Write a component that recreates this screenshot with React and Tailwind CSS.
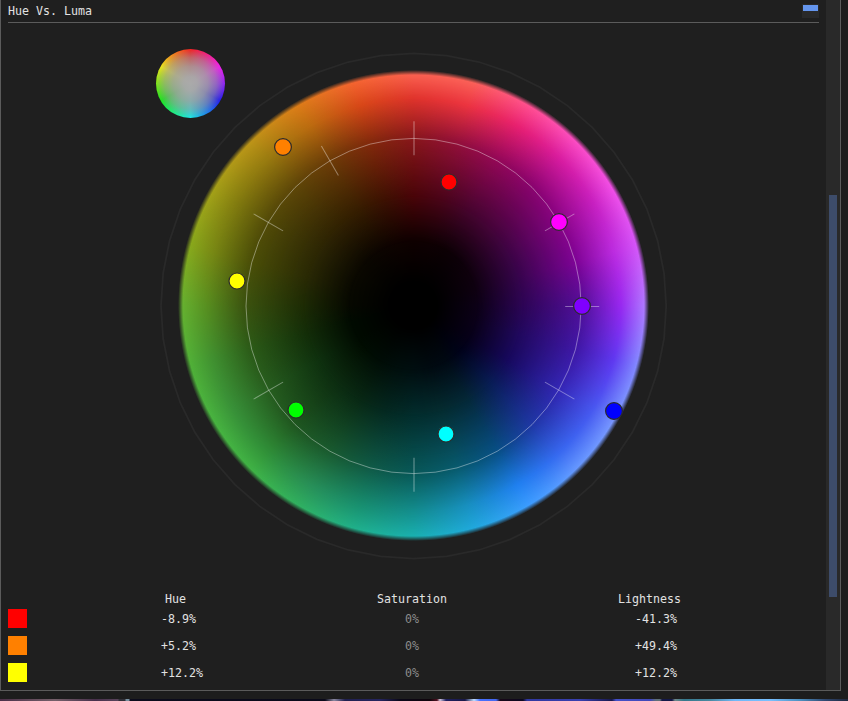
import React from "react";

// Each ring lists 24 colours, clockwise from the top in 15 degree steps.
const RINGS = [
  {
    from: 0.1,
    to: 0.27,
    colors: "#0e0000 #0e0002 #0c0004 #0c0008 #0e000c #0e0010 #0c0016 #0a0018 #060018 #000218 #000812 #000a10 #000e10 #000e0c #000c06 #000c02 #000a00 #000a00 #060800 #080800 #0a0800 #0a0600 #0c0400 #0e0200",
  },
  {
    from: 0.27,
    to: 0.46,
    colors: "#480408 #480418 #44042c #440438 #3e0444 #36044c #2c0454 #20085c #16085c #081c54 #042838 #042c30 #022c2c #042820 #082814 #0c2c10 #0e300e #122c08 #1c2a04 #282804 #2c2604 #302202 #341c00 #3c1002",
  },
  {
    from: 0.46,
    to: 0.72,
    colors: "#8c181c #94103a #960858 #8c0470 #8c0488 #800498 #54109c #4018a8 #3428b8 #2038a8 #085088 #085c70 #085a5a #105c48 #1a5c30 #205820 #286020 #2c5c18 #3c5410 #4c5008 #544c08 #604808 #703e08 #842a0c",
  },
  {
    from: 0.72,
    to: 0.88,
    colors: "#e0342c #ec3440 #e82070 #d81ca0 #c820c0 #bc2ce0 #9828f0 #6038f0 #4858f0 #3868f0 #2080f0 #1890c0 #149090 #189070 #289058 #309038 #389038 #409030 #589020 #788814 #868010 #9a7c10 #bc6c10 #d84818",
  },
  {
    from: 0.88,
    to: 0.98,
    colors: "#fa6050 #fa6058 #ff4f90 #fb4cc4 #f04fe8 #d455f8 #ae78ff #8288ff #7896ff #6698ff #3c9cff #20a8dc #1ab0b0 #20b08a #30b060 #40b245 #48b340 #50b038 #66b030 #88a81c #a4a018 #bc9418 #dc7c18 #f46430",
  },
];

const TICKS = [0, 60, 90, 120, 180, 240, 300, 330];

const PINS = [
  { x: 449, y: 182, r: 8, fill: "#ff0000" },
  { x: 283, y: 147, r: 8.4, fill: "#ff8000" },
  { x: 237, y: 281, r: 8, fill: "#ffff00" },
  { x: 296, y: 410, r: 8, fill: "#00ff00" },
  { x: 446, y: 434, r: 8, fill: "#00ffff" },
  { x: 614, y: 411, r: 8.4, fill: "#0000ff" },
  { x: 582, y: 306, r: 8.4, fill: "#8000ff" },
  { x: 559, y: 222, r: 8.4, fill: "#ff00ff" },
];

const ROWS = [
  { swatch: "bg-[#ff0000]", hue: "-8.9%", light: "-41.3%" },
  { swatch: "bg-[#ff8000]", hue: "+5.2%", light: "+49.4%" },
  { swatch: "bg-[#ffff00]", hue: "+12.2%", light: "+12.2%" },
];

function conic(colors) {
  const list = colors.split(" ");
  return `conic-gradient(${[...list, list[0]].join(", ")})`;
}

function circlePoints(r) {
  return Array.from({ length: 48 }, (_, i) => {
    const a = (i * Math.PI) / 24;
    return `${413.6 + r * Math.sin(a)},${306 - r * Math.cos(a)}`;
  }).join(" ");
}

function HueWheel() {
  return (
    <div
      className="absolute left-[178px] top-[70px] h-[471px] w-[471px] rounded-full"
      style={{ maskImage: "radial-gradient(circle closest-side, #000 230.5px, transparent 235.5px)" }}
    >
      <div className="absolute inset-0 bg-black" />
      {RINGS.map((ring) => (
        <div
          key={ring.to}
          className="absolute inset-0"
          style={{
            backgroundImage: conic(ring.colors),
            maskImage: `radial-gradient(circle closest-side, transparent ${ring.from * 100}%, #000 ${ring.to * 100}%)`,
          }}
        />
      ))}
    </div>
  );
}

function MiniWheel() {
  return (
    <div className="absolute left-[156px] top-[49px] h-[69px] w-[69px] overflow-hidden rounded-full bg-[conic-gradient(#f62020,#f61c84_30deg,#f61cf0_60deg,#9020f8_90deg,#2018f0_120deg,#1880f0_150deg,#18e8e8_180deg,#18f080_210deg,#18e818_240deg,#80e818_270deg,#f0e818_300deg,#f68018_330deg,#f62020)]">
      <div className="h-full w-full bg-[radial-gradient(circle_closest-side,#aaaaaa_0%,#a8a8a8fa_20%,#a0a0a0d8_50%,#98989890_75%,#90909040_90%,#90909000_100%)]" />
    </div>
  );
}

function Canvas() {
  return (
    <div className="relative -mt-[23px] h-[590px] w-full shrink-0">
      <HueWheel />
      <MiniWheel />
      <svg className="absolute left-0 top-0" width="820" height="590" viewBox="0 0 820 590" fill="none">
        <polygon points={circlePoints(252.6)} stroke="#292929" strokeWidth="1.8" />
        <polygon points={circlePoints(167.6)} stroke="#fff" strokeOpacity="0.38" />
        {TICKS.map((a) => (
          <line
            key={a}
            x1="414"
            y1="121.3"
            x2="414"
            y2="155.3"
            transform={`rotate(${a} 414 306.5)`}
            stroke="#fff"
            strokeOpacity={a % 180 === 0 ? 0.21 : 0.38}
            strokeWidth={a % 180 === 0 ? 2 : 1}
          />
        ))}
        {PINS.map((p) => (
          <circle key={p.fill} cx={p.x} cy={p.y} r={p.r} fill={p.fill} stroke="#2b2b2b" strokeWidth="1.2" />
        ))}
      </svg>
    </div>
  );
}

function ValueTable() {
  return (
    <div className="flex flex-col pl-[7px]">
      <div className="mt-[2px] flex h-[17px] items-start pt-px">
        <div className="w-[157px]" />
        <div className="w-[212px]">Hue</div>
        <div className="w-[241px]">Saturation</div>
        <div>Lightness</div>
      </div>
      <div className="flex flex-col gap-2">
        {ROWS.map((row) => (
          <div key={row.hue} className="flex h-[19px] items-center">
            <div className={`h-[19px] w-[19px] ${row.swatch}`} />
            <div className="ml-[134px] w-[244px] pt-0.5">{row.hue}</div>
            <div className="w-[230px] pt-0.5 text-[#8b8b8b]">0%</div>
            <div className="pt-0.5">{row.light}</div>
          </div>
        ))}
      </div>
    </div>
  );
}

export default function App() {
  return (
    <div className="flex h-[701px] w-[848px] flex-col overflow-hidden bg-[#1d1d1d] font-['DejaVu_Sans_Mono',monospace] text-[11.63px] leading-[13px] text-[#e2e2e2]">
      <div className="flex h-[691px] w-[841px] shrink-0 border-b border-l border-r border-[#5b5b5b] bg-[#1f1f1f]">
        <div className="-ml-px flex w-[826px] shrink-0 flex-col pl-px">
          <div className="ml-[7px] flex h-[23px] w-[811px] shrink-0 items-start justify-between border-b border-[#5b5b5b]">
            <span className="mt-[5px]">Hue Vs. Luma</span>
            <div className="mt-1 h-[14px] w-[17px] bg-[#292929] p-px">
              <div className="h-[6px] bg-[#6495ed]" />
            </div>
          </div>
          <div className="-ml-px flex">
            <Canvas />
          </div>
          <ValueTable />
        </div>
        <div className="flex w-[14px] shrink-0 justify-center bg-[#292929] pt-[195px]">
          <div className="mr-px h-[402px] w-2 bg-[#3d4c6a]" />
        </div>
      </div>
      <div className="h-2 shrink-0" />
      <div className="h-[2px] shrink-0 bg-[linear-gradient(90deg,#4a2f48_0px,#75606a_55px,#48304c_95px,#57435a_118px,#303038_119px,#303038_125px,#7890a0_126px,#7890a0_129px,#0c0c1c_130px,#0a0a1a_325px,#8a88a0_334px,#202050_345px,#252560_380px,#0a0818_400px,#10050c_430px,#501020_437px,#d0c8e0_440px,#202060_446px,#181848_465px,#c0e0ff_474px,#4670ff_480px,#4468f0_496px,#180818_500px,#0c0820_523px,#3038a0_527px,#3840b0_580px,#18184c_612px,#4450c8_616px,#4048b8_650px,#607078_656px,#607078_660px,#141848_662px,#141848_672px,#708888_675px,#34788c_684px,#4888a0_710px,#70b8f8_735px,#78c0ff_770px,#4c90c0_800px,#304870_825px,#20283c_848px)]" />
    </div>
  );
}
